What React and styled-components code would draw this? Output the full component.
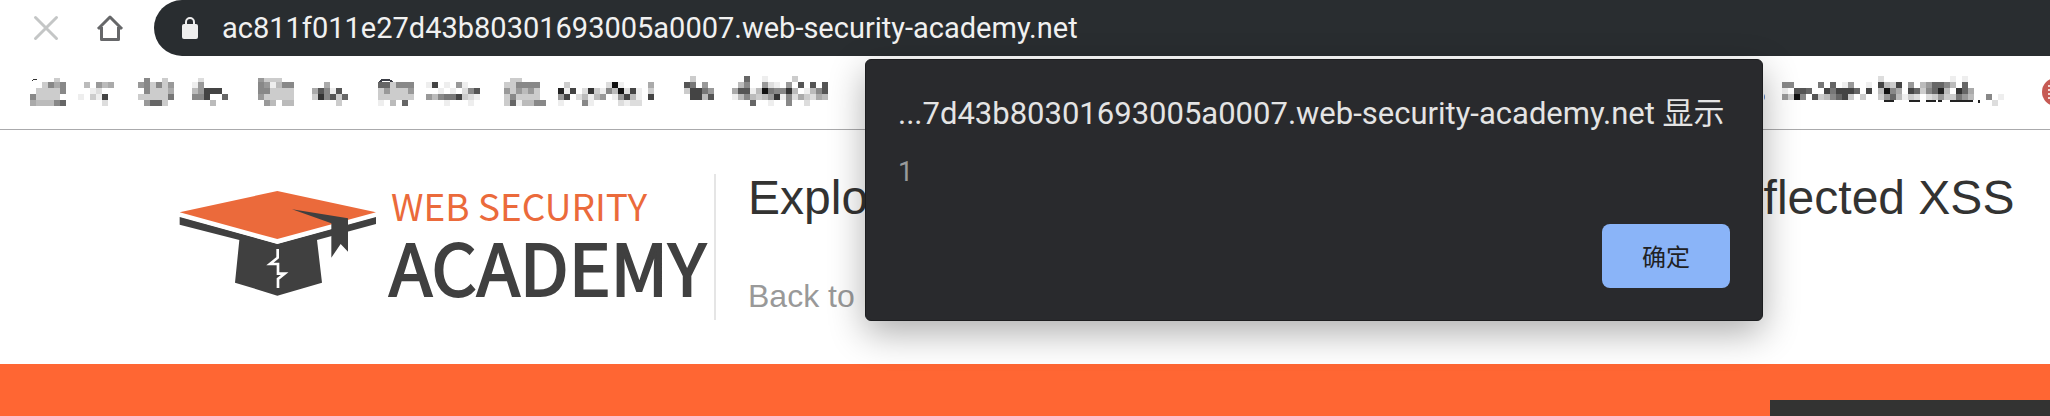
import React from "react";
import styled, { createGlobalStyle } from "styled-components";

const GlobalStyle = createGlobalStyle`
  * { box-sizing: border-box; }
  body { margin: 0; background: #fff; font-family: Roboto, "Noto Sans CJK SC", sans-serif; }
  button, input { font: inherit; border: 0; padding: 0; margin: 0; background: none; }
  svg { display: block; flex: none; }
`;

const Page = styled.div`
  position: relative;
  display: flex;
  flex-direction: column;
  min-height: 100vh;
  overflow: hidden;
`;

const Toolbar = styled.header`
  display: flex;
  align-items: center;
  height: 56px;
  padding-left: 32px;
`;

const ToolButton = styled.button`
  display: flex;
  width: 28px;
  height: 28px;
  margin-right: ${(p) => p.$gap}px;
`;

const AddressBar = styled.label`
  display: flex;
  flex: 1;
  align-items: center;
  gap: 22px;
  height: 56px;
  padding-left: 28px;
  border-radius: 28px 0 0 28px;
  background: #292d30;
`;

const AddressInput = styled.input`
  flex: 1;
  min-width: 0;
  height: 40px;
  color: #f1f1f1;
  font-size: 29px;
`;

const Bookmarks = styled.nav`
  display: flex;
  align-items: flex-start;
  gap: 24px;
  height: 74px;
  padding: 20px 0 0 30px;
  margin-right: -20px;
  border-bottom: 1px solid #aaaaac;
`;

const Bookmark = styled.button`
  display: flex;
  flex: none;
`;

const MoreBookmarks = styled.div`
  display: flex;
  flex: none;
  gap: 38px;
  margin-left: auto;
`;

const LabHeader = styled.section`
  display: flex;
  align-items: flex-start;
  height: 234px;
  padding: 44px 36px 44px 179px;
`;

const Brand = styled.a`
  display: flex;
  flex: none;
  gap: 12px;
  width: 535px;
  padding-top: 16px;
  color: #404040;
  text-decoration: none;
`;

const BrandName = styled.span`
  display: flex;
  flex-direction: column;
  font-family: "Noto Sans CJK SC", sans-serif;
  white-space: nowrap;
`;

const BrandTop = styled.span`
  padding-left: 2px;
  color: #eb6a3b;
  font-size: 37px;
  line-height: 30px;
`;

const BrandBottom = styled.span`
  font-size: 71px;
  line-height: 90px;
  -webkit-text-stroke: 2px #404040;
`;

const LabInfo = styled.div`
  flex: 1;
  height: 146px;
  padding-left: 32px;
  border-left: 2px solid #e5e5e5;
  font-family: "Liberation Sans", sans-serif;
  white-space: nowrap;
`;

const LabTitle = styled.h1`
  margin: 0 0 44px;
  color: #333332;
  font-size: 48px;
  font-weight: 400;
  line-height: 48px;
`;

const BackLink = styled.a`
  display: block;
  color: #999;
  font-size: 32px;
  line-height: 60px;
  text-decoration: none;
`;

const Banner = styled.main`
  display: flex;
  flex: 1;
  justify-content: flex-end;
  min-height: 52px;
  padding-top: 36px;
  background: #ff6633;
`;

const BannerPanel = styled.div`
  width: 280px;
  background: #333332;
`;

const Dialog = styled.section`
  position: absolute;
  top: 59px;
  right: 287px;
  display: flex;
  flex-direction: column;
  width: 898px;
  height: 262px;
  padding: 34px 32px 32px;
  border: 1px solid #1c1d1f;
  border-radius: 6px;
  background: #292a2d;
  box-shadow: 0 12px 36px rgba(0, 0, 0, 0.32);
`;

const DialogTitle = styled.h2`
  margin: 0;
  color: #e4e4e4;
  font-size: 31px;
  font-weight: 400;
  line-height: 40px;
  white-space: nowrap;
`;

const DialogMessage = styled.p`
  margin: 22px 0 0;
  color: #999a9b;
  font-size: 27px;
  line-height: 32px;
`;

const ConfirmButton = styled.button`
  align-self: flex-end;
  width: 128px;
  height: 64px;
  margin-top: auto;
  padding-bottom: 2px;
  border-radius: 8px;
  background: #8ab4f8;
  color: #202124;
  font-size: 24px;
`;

// Each row holds one hex grey level per cell; a dot is an empty cell.
const leftBookmarks = [
  [
    "....c.........",
    "..c8a8...b.9ba",
    ".cccc8....ed..",
    "8cccc...e.ce4.",
    "abbb86......d.",
  ],
  [
    ".8..c.....d.....",
    "98c8c9...e9.....",
    ".8ccca...b9444..",
    "ccccc7...884..6.",
    ".966c.......b...",
  ],
  [
    "9ccc............",
    "89eb88.....a....",
    "88cccc...a58e5..",
    "9ccccc...c385c6.",
    ".9b.bb.......c..",
  ],
  [
    ".................",
    "66c888..e4.e.9e..",
    "c9ccc9....e.e.d85",
    "cccccc..9b8774cde",
    "e.b.6......e...e.",
  ],
  [
    ".cc.......................",
    "cc8888....c......d1e....a.",
    "9c9b9c...2e4.d3ce8b1d4e.c.",
    "c8cccc...94.dbeb9.e94be.4.",
    "c6ebb88..e...8e....dedd...",
  ],
  [
    ".c........6..e....c.....",
    "57.9.....b8..9de.9.5.5.5",
    "c4479...a55eb17883b.eb85",
    ".44b5...eb8bcb93e8dacdab",
    "...........6..e..8..d...",
  ],
];

const rightBookmark = [
  "................d...........e.e......",
  "88....7.6.e9..e.4bc4.9.b9668b.6......",
  "e.556..474446.4.b18a.46c862b.36a.....",
  "9c18.5cb864c.c..c96becd.dc9cc79b..8.e",
  "...................................d.",
];

function Mosaic({ rows, top = 0, children }) {
  const width = rows[0].length * 6;
  return (
    <svg width={width} height="30" viewBox={`0 0 ${width} 30`} shapeRendering="crispEdges" aria-hidden="true">
      {rows.map((row, y) =>
        [...row].map((level, x) =>
          level === "." ? null : (
            <rect
              key={`${x}-${y}`}
              x={x * 6}
              y={y === 0 ? top : y * 6}
              width="6"
              height={y === 0 ? 6 - top : 6}
              fill={`#${level}${level}${level}`}
            />
          )
        )
      )}
      {children}
    </svg>
  );
}

const StopIcon = () => (
  <svg width="28" height="28" viewBox="0 0 28 28" fill="none" stroke="#c4c6c6" strokeWidth="3" strokeLinecap="round">
    <path d="M3.500 3.500 24.500 24.500M24.500 3.500 3.500 24.500" />
  </svg>
);

const HomeIcon = () => (
  <svg width="28" height="28" viewBox="0 0 28 28" fill="none" stroke="#666769" strokeWidth="3">
    <path d="M2 15 14 3l12 12M5.500 13V25.500H22.500V13" strokeLinejoin="round" />
  </svg>
);

const LockIcon = () => (
  <svg width="18" height="22" viewBox="0 0 18 22">
    <rect x="0" y="7" width="16" height="15" rx="2" fill="#eeeeee" />
    <path d="M4 8V5a4 4 0 0 1 8 0v3" fill="none" stroke="#eeeeee" strokeWidth="2" />
  </svg>
);

const CapLogo = () => (
  <svg width="198" height="106" viewBox="57 60 594 318" aria-hidden="true">
    <path d="M59 141 352 222 648 141V162L471 210 486 338 352 377 225 338 238 210 59 164Z" fill="#404040" />
    <path d="M57 127 352 207 650 127V139L352 221 57 139Z" fill="#fff" />
    <path d="M59 127 352 63 648 127 352 207Z" fill="#eb6a3b" />
    <path d="M396 118 564 145V245L542 222 514 263V160Z" fill="#404040" />
    <path d="M353 237V263L330 282H354V311H374L354 327V354" fill="none" stroke="#fff" strokeWidth="8" />
  </svg>
);

export default function App() {
  return (
    <Page>
      <GlobalStyle />
      <Toolbar>
        <ToolButton $gap={36} aria-label="停止"><StopIcon /></ToolButton>
        <ToolButton $gap={30} aria-label="主页"><HomeIcon /></ToolButton>
        <AddressBar>
          <LockIcon />
          <AddressInput
            type="text"
            aria-label="地址"
            readOnly
            value="ac811f011e27d43b80301693005a0007.web-security-academy.net"
          />
        </AddressBar>
      </Toolbar>
      <Bookmarks>
        {leftBookmarks.map((rows, i) => (
          <Bookmark key={i} aria-label={`书签 ${i + 1}`}>
            <Mosaic rows={rows} top={i < 5 ? 2 : 0}>
              {i === 0 && <path d="M2 5 4 3H7" fill="none" stroke="#333" strokeWidth="1" />}
              {i === 3 && <path d="M2 6Q3 4 5 4H10Q13 4 14 6" fill="none" stroke="#3b3d45" strokeWidth="2" />}
            </Mosaic>
          </Bookmark>
        ))}
        <MoreBookmarks>
          <Bookmark aria-label="书签 7">
            <svg width="18" height="30" viewBox="0 0 18 30" aria-hidden="true">
              <circle cx="-3" cy="21" r="4" fill="#5b86cd" />
            </svg>
            <Mosaic rows={rightBookmark}>
              <path d="M102 25H112M127 25H138M144 25H154M156 25H160M168 25H191" stroke="#222" strokeWidth="2" />
              <path d="M197 24V27" stroke="#222" strokeWidth="2" />
            </Mosaic>
          </Bookmark>
          <Bookmark aria-label="书签 8">
            <svg width="28" height="32" viewBox="0 0 28 32" aria-hidden="true">
              <circle cx="14" cy="16" r="14" fill="#c65a54" />
              <path d="M6 10H22M6 14H22M6 18H22M6 22H22" stroke="#f3d9d7" strokeWidth="2" />
            </svg>
          </Bookmark>
        </MoreBookmarks>
      </Bookmarks>
      <LabHeader>
        <Brand href="#academy">
          <CapLogo />
          <BrandName>
            <BrandTop>WEB SECURITY</BrandTop>
            <BrandBottom>ACADEMY</BrandBottom>
          </BrandName>
        </Brand>
        <LabInfo>
          <LabTitle>Exploiting HTTP request smuggling to deliver reflected XSS</LabTitle>
          <BackLink href="#lab">Back to lab description</BackLink>
        </LabInfo>
      </LabHeader>
      <Banner>
        <BannerPanel />
      </Banner>
      <Dialog role="alertdialog" aria-labelledby="dialog-title" aria-describedby="dialog-message">
        <DialogTitle id="dialog-title">
          ...7d43b80301693005a0007.web-security-academy.net 显示
        </DialogTitle>
        <DialogMessage id="dialog-message">1</DialogMessage>
        <ConfirmButton>确定</ConfirmButton>
      </Dialog>
    </Page>
  );
}
